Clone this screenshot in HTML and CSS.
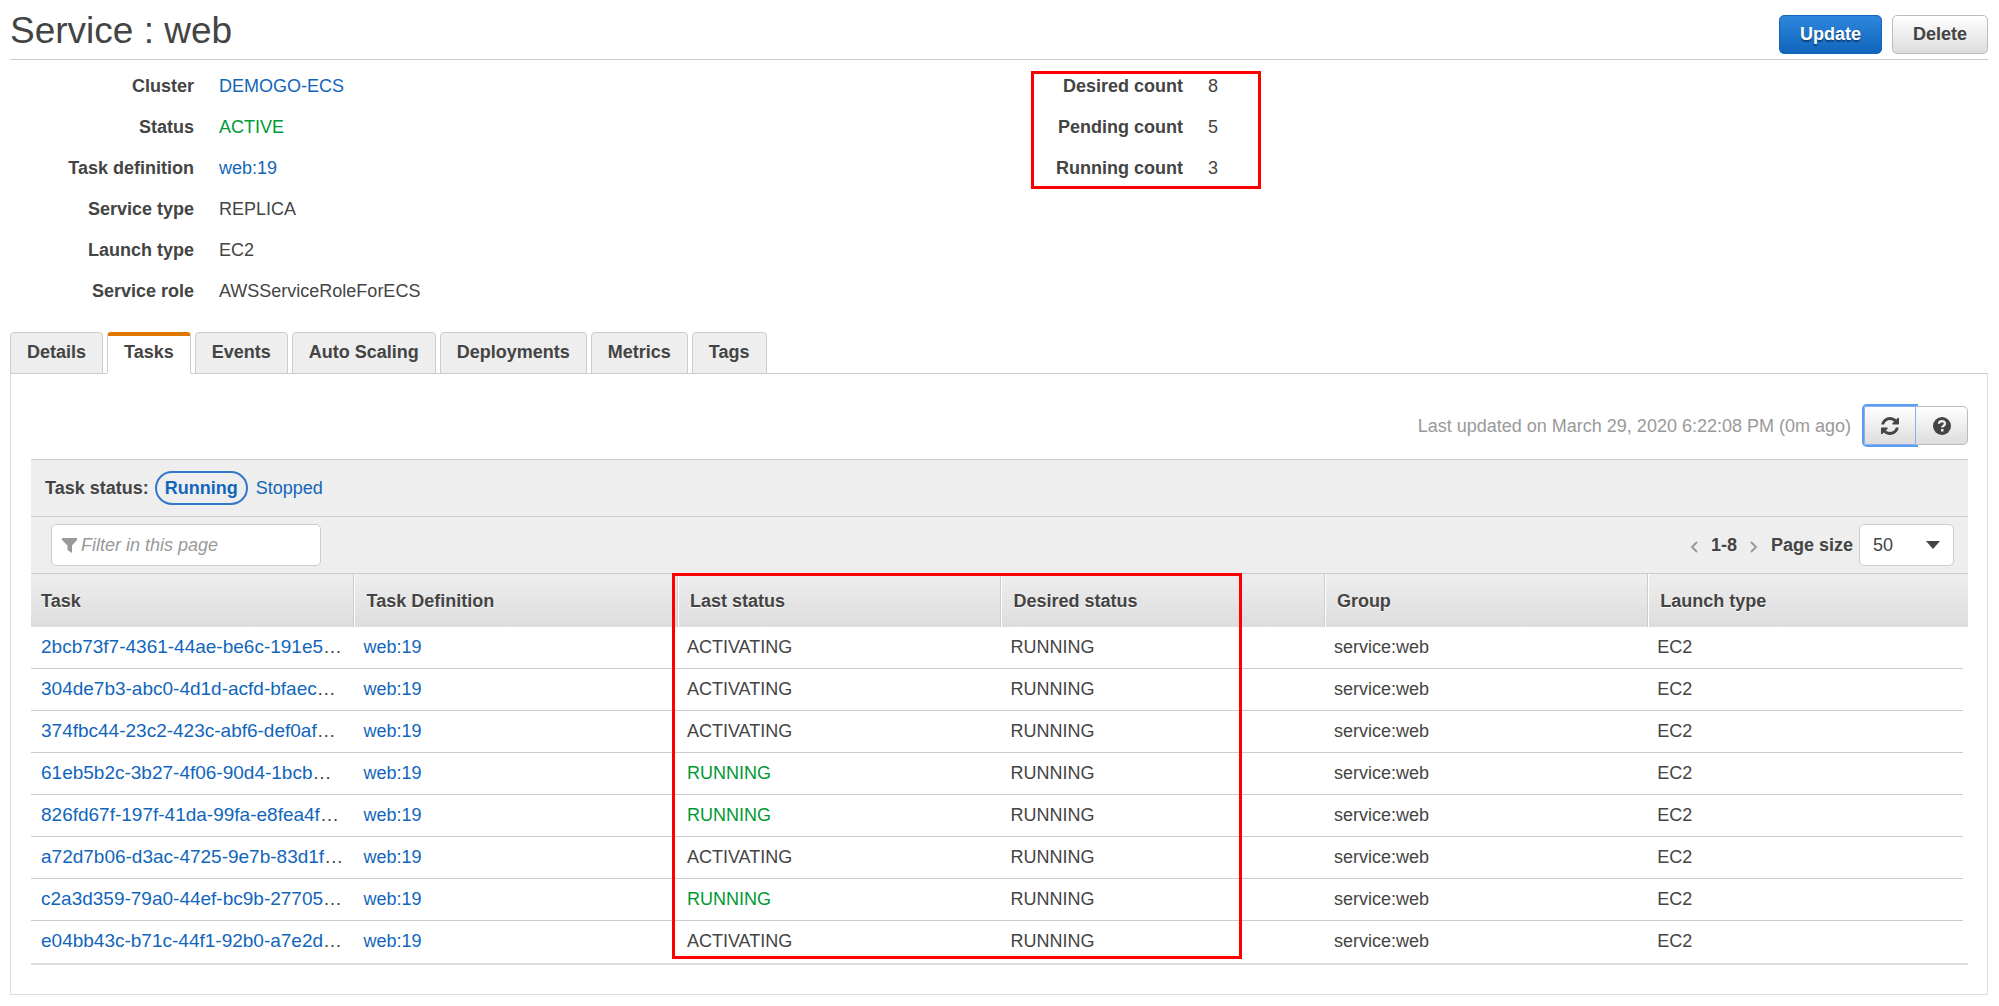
FILE: index.html
```
<!DOCTYPE html>
<html lang="en">
<head>
    <meta charset="UTF-8">
    <meta name="viewport" content="width=device-width, initial-scale=1.0">
    <title>Service : web</title>
    <link rel="stylesheet" href="styles.css">
</head>
<body>
    <header class="page-header">
        <h1>Service : web</h1>
        <div class="actions">
            <button class="btn btn-primary">Update</button>
            <button class="btn">Delete</button>
        </div>
    </header>

    <section class="summary">
        <dl class="facts">
            <dt>Cluster</dt><dd><a href="#">DEMOGO-ECS</a></dd>
            <dt>Status</dt><dd class="ok">ACTIVE</dd>
            <dt>Task definition</dt><dd><a href="#">web:19</a></dd>
            <dt>Service type</dt><dd>REPLICA</dd>
            <dt>Launch type</dt><dd>EC2</dd>
            <dt>Service role</dt><dd>AWSServiceRoleForECS</dd>
        </dl>
        <div class="counts">
            <dl class="facts">
                <dt>Desired count</dt><dd>8</dd>
                <dt>Pending count</dt><dd>5</dd>
                <dt>Running count</dt><dd>3</dd>
            </dl>
            <div class="mark mark-counts"></div>
        </div>
    </section>

    <nav class="tabs">
        <a href="#" class="tab">Details</a>
        <a href="#" class="tab active">Tasks</a>
        <a href="#" class="tab">Events</a>
        <a href="#" class="tab">Auto Scaling</a>
        <a href="#" class="tab">Deployments</a>
        <a href="#" class="tab">Metrics</a>
        <a href="#" class="tab">Tags</a>
    </nav>

    <main class="panel">
        <div class="refresh-bar">
            <span class="updated">Last updated on March 29, 2020 6:22:08 PM (0m ago)</span>
            <button class="btn icon-btn refresh" aria-label="Refresh">
                <svg viewBox="0 0 1536 1536" width="18" height="18"><path d="M1511 928q0 5-1 7-64 268-268 434.500T764 1536q-146 0-282.500-55T238 1324l-129 129q-19 19-45 19t-45-19-19-45V960q0-26 19-45t45-19h448q26 0 45 19t19 45-19 45l-137 137q71 66 161 102t187 36q134 0 250-65t186-179q11-17 53-117 8-23 30-23h192q13 0 22.500 9.500t9.500 22.500zm25-800v448q0 26-19 45t-45 19h-448q-26 0-45-19t-19-45 19-45l138-138Q969 256 768 256q-134 0-250 65T332 500q-11 17-53 117-8 23-30 23H50q-13 0-22.500-9.500T18 608v-7q65-268 270-434.500T768 0q146 0 284 55.500T1297 212l130-129q19-19 45-19t45 19 19 45z"/></svg>
            </button>
            <button class="btn icon-btn help" aria-label="Help">
                <svg viewBox="0 0 18 18" width="18" height="18"><circle cx="9" cy="9" r="9"/><path d="M6 6.800C6 3.400 12 3.200 12 6.700C12 8.700 9.200 8.600 9.200 10.600" fill="none" stroke="#ececec" stroke-width="2.400"/><rect x="8" y="12" width="2.500" height="2.500" fill="#ececec"/></svg>
            </button>
        </div>

        <div class="status-bar">
            <strong>Task status:</strong>
            <a href="#" class="pill">Running</a>
            <a href="#">Stopped</a>
        </div>

        <div class="filter-bar">
            <div class="filter">
                <svg viewBox="0 0 15 15" width="15" height="15"><path d="M0 0h15v2L10 7.500V15L5.500 12V7.500L0 2z"/></svg>
                <input type="text" placeholder="Filter in this page" aria-label="Filter in this page">
            </div>
            <div class="pager">
                <button class="page-arrow" aria-label="Previous page"><svg viewBox="0 0 8 12" width="8" height="12"><path d="M7 1L2 6l5 5"/></svg></button>
                <strong>1-8</strong>
                <button class="page-arrow" aria-label="Next page"><svg viewBox="0 0 8 12" width="8" height="12"><path d="M1 1l5 5-5 5"/></svg></button>
                <label for="pageSize">Page size</label>
                <div class="select">
                    <select id="pageSize"><option>50</option></select>
                </div>
            </div>
        </div>

        <div class="table-wrap">
            <table>
                <thead>
                    <tr><th>Task</th><th>Task Definition</th><th>Last status</th><th>Desired status</th><th>Group</th><th>Launch type</th></tr>
                </thead>
                <tbody>
                    <tr><td class="task-id"><a href="#">2bcb73f7-4361-44ae-be6c-191e5</a>…</td><td><a href="#">web:19</a></td><td>ACTIVATING</td><td>RUNNING</td><td>service:web</td><td>EC2</td></tr>
                    <tr><td class="task-id"><a href="#">304de7b3-abc0-4d1d-acfd-bfaec</a>…</td><td><a href="#">web:19</a></td><td>ACTIVATING</td><td>RUNNING</td><td>service:web</td><td>EC2</td></tr>
                    <tr><td class="task-id"><a href="#">374fbc44-23c2-423c-abf6-def0af</a>…</td><td><a href="#">web:19</a></td><td>ACTIVATING</td><td>RUNNING</td><td>service:web</td><td>EC2</td></tr>
                    <tr><td class="task-id"><a href="#">61eb5b2c-3b27-4f06-90d4-1bcb</a>…</td><td><a href="#">web:19</a></td><td class="ok">RUNNING</td><td>RUNNING</td><td>service:web</td><td>EC2</td></tr>
                    <tr><td class="task-id"><a href="#">826fd67f-197f-41da-99fa-e8fea4f</a>…</td><td><a href="#">web:19</a></td><td class="ok">RUNNING</td><td>RUNNING</td><td>service:web</td><td>EC2</td></tr>
                    <tr><td class="task-id"><a href="#">a72d7b06-d3ac-4725-9e7b-83d1f</a>…</td><td><a href="#">web:19</a></td><td>ACTIVATING</td><td>RUNNING</td><td>service:web</td><td>EC2</td></tr>
                    <tr><td class="task-id"><a href="#">c2a3d359-79a0-44ef-bc9b-27705</a>…</td><td><a href="#">web:19</a></td><td class="ok">RUNNING</td><td>RUNNING</td><td>service:web</td><td>EC2</td></tr>
                    <tr><td class="task-id"><a href="#">e04bb43c-b71c-44f1-92b0-a7e2d</a>…</td><td><a href="#">web:19</a></td><td>ACTIVATING</td><td>RUNNING</td><td>service:web</td><td>EC2</td></tr>
                </tbody>
            </table>
            <div class="mark mark-status"></div>
        </div>
    </main>
</body>
</html>
```
FILE: styles.css
```
* { box-sizing: border-box; }
body { margin: 0; padding: 8px 11px 12px 10px; background: #fff; color: #444; font-family: "Helvetica Neue", "Liberation Sans", Arial, sans-serif; font-size: 18px; line-height: 24px; }
a { color: #1166bb; text-decoration: none; }
a:hover { text-decoration: underline; }
.ok { color: #009933; }

/* header */
.page-header { display: flex; justify-content: space-between; align-items: flex-end; height: 52px; padding-bottom: 5px; border-bottom: 1px solid #ccc; }
h1 { margin: 0; font-size: 37px; line-height: 46px; font-weight: normal; }
.actions { display: flex; gap: 10px; }
.btn { height: 39px; padding: 0 19px; border: 1px solid #bbb; border-radius: 5px; background: linear-gradient(#fff, #ddd); color: #444; font-family: inherit; font-size: 18px; font-weight: bold; cursor: pointer; }
.actions .btn { padding: 0 20px; }
.btn-primary { border-color: #1166bb; background: linear-gradient(#2e86dd, #1166bb); color: #fff; text-shadow: 0 2px 1px rgba(0,0,0,0.4); }

/* summary */
.summary { display: grid; grid-template-columns: 1fr 1fr; align-items: start; padding: 6px 0 20px; }
.facts { display: grid; grid-template-columns: 184px 1fr; column-gap: 25px; margin: 0; line-height: 41px; }
.facts dt { font-weight: bold; text-align: right; }
.facts dd { margin: 0; }
.counts { position: relative; }

/* red highlight boxes */
.mark { position: absolute; border: 3px solid #f00; pointer-events: none; }
.mark-counts { top: 5px; left: 32px; width: 230px; height: 118px; }
.mark-status { top: -1px; left: 33.1%; width: 570px; height: 386px; }

/* tabs */
.tabs { display: flex; gap: 4px; position: relative; margin-bottom: -1px; }
.tab { height: 42px; padding: 0 16px; border: 1px solid #ccc; border-radius: 4px 4px 0 0; background: #eee; color: #444; font-weight: bold; line-height: 38px; }
.tab.active { border-top: 4px solid #e07700; border-bottom-color: #fff; background: #fff; line-height: 32px; }

/* panel */
.panel { padding: 30px 19px 29px 20px; border: 1px solid #ddd; border-top-color: #ccc; }
.refresh-bar { display: flex; justify-content: flex-end; align-items: center; padding: 2px 0 14px; }
.updated { margin-right: 13px; color: #999; }
.icon-btn { display: flex; align-items: center; justify-content: center; width: 52px; padding: 0; }
.icon-btn svg { fill: #444; }
.refresh { border-color: #8ab0e8; border-radius: 3px 0 0 3px; box-shadow: 0 0 0 2px #5b9df5; }
.help { position: relative; border-left: 0; border-radius: 0 5px 5px 0; }

.status-bar { display: flex; align-items: center; height: 57px; padding: 0 14px; border-top: 1px solid #ccc; background: #eee; }
.pill { height: 34px; margin: 0 8px 0 6px; padding: 0 8px; border: 2px solid #3377cc; border-radius: 17px; font-weight: bold; line-height: 30px; }

.filter-bar { display: flex; justify-content: space-between; align-items: center; height: 57px; padding: 0 14px 0 20px; border-top: 1px solid #ccc; background: #eee; }
.filter { display: flex; align-items: center; width: 270px; height: 42px; padding: 0 10px; border: 1px solid #ccc; border-radius: 5px; background: #fff; }
.filter svg { flex: none; fill: #999; }
.filter input { flex: 1; min-width: 0; padding: 0 4px; border: 0; outline: 0; background: none; color: #444; font: italic 18px "Helvetica Neue", "Liberation Sans", Arial, sans-serif; }
.filter input::placeholder { color: #999; opacity: 1; }
.pager { display: flex; align-items: center; font-weight: bold; }
.page-arrow { display: flex; padding: 4px 0 0; margin: 0 13px; border: 0; background: none; }
.page-arrow path { fill: none; stroke: #999; stroke-width: 2; }
.select { position: relative; margin-left: 6px; }
.select::after { content: ""; position: absolute; top: 17px; right: 14px; border: 7px solid transparent; border-top: 8px solid #444; border-bottom: 0; pointer-events: none; }
select { width: 95px; height: 42px; padding: 0 13px; appearance: none; border: 1px solid #ccc; border-radius: 5px; background: #fff; color: #444; font-family: inherit; font-size: 18px; }

/* table */
.table-wrap { position: relative; border-top: 1px solid #ccc; border-bottom: 2px solid #ddd; }
table { width: 100%; table-layout: fixed; border-collapse: separate; border-spacing: 0; }
th { width: 16.7%; height: 53px; padding: 0 11px; border-left: 1px solid #fff; border-right: 1px solid #ccc; background: linear-gradient(#eee, #ddd); text-align: left; text-shadow: 0 1px 1px #fff; }
th:first-child { padding-left: 10px; border-left: 0; }
th:last-child { width: auto; border-right: 0; }
td { height: 42px; padding: 0 9px 2px; border-bottom: 1px solid #ccc; white-space: nowrap; }
td:first-child { padding-left: 10px; }
/* row lines stop short of the right edge */
td:last-child { border-bottom: 0; background: linear-gradient(#ccc, #ccc) left bottom / calc(100% - 5px) 1px no-repeat; }
tbody tr:last-child td { border-bottom: 0; background: none; }
.task-id { font-size: 19px; }
```
